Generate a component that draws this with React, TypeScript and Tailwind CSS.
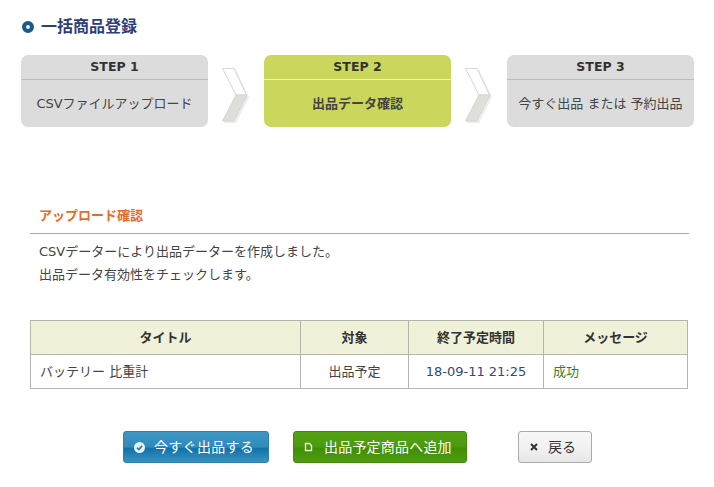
const font = "font-['DejaVu_Sans','Noto_Sans_CJK_JP',sans-serif]";

const steps = [
  { label: "STEP 1", body: "CSVファイルアップロード", active: false },
  { label: "STEP 2", body: "出品データ確認", active: true },
  { label: "STEP 3", body: "今すぐ出品 または 予約出品", active: false },
];

function Chevron() {
  return (
    <svg width="30" height="68" viewBox="0 0 30 68" className="shrink-0">
      <path d="M3 13 L15 13 L28 40 L15 66 L3 66 L16 40 Z" fill="#ecece9" />
      <path d="M1.5 11.5 L13 11.5 L25.5 38 L15 38 Z" fill="#ffffff" stroke="#d6d6d2" strokeWidth="1" />
      <path d="M15 38 L26 38 L12.5 64 L1.5 64 Z" fill="#dededa" stroke="#d6d6d2" strokeWidth="1" />
    </svg>
  );
}

function StepCard({ label, body, active }: { label: string; body: string; active: boolean }) {
  return (
    <div className={`w-[187px] h-[72px] rounded-[7px] flex flex-col ${active ? "bg-[#cbd65c]" : "bg-[#dcdcdc]"}`}>
      <div
        className={`h-[25px] border-b text-center text-[12.5px] font-bold leading-[24px] text-[#333] ${
          active ? "border-[#eef2c4]" : "border-[#bdbdbd]"
        }`}
      >
        {label}
      </div>
      <div className={`flex-1 flex items-center justify-center text-[13px] text-[#444] ${active ? "font-bold text-[#333]" : ""}`}>
        {body}
      </div>
    </div>
  );
}

export default function App() {
  return (
    <div className={`w-[714px] h-[487px] bg-white overflow-hidden ${font}`}>
      <div className="pt-[16px] pl-[22px] h-[55px]">
        <div className="flex items-center gap-[7px] h-[22px]">
          <span className="w-[12px] h-[12px] rounded-full border-[4px] border-[#17598a] bg-[#e6eef3]" />
          <h1 className="text-[16px] font-bold text-[#2c3f7c]">一括商品登録</h1>
        </div>
      </div>

      <div className="flex items-center pl-[21px]">
        <StepCard {...steps[0]} />
        <div className="w-[56px] h-[72px] flex justify-center items-center"><Chevron /></div>
        <StepCard {...steps[1]} />
        <div className="w-[56px] h-[72px] flex justify-center items-center"><Chevron /></div>
        <StepCard {...steps[2]} />
      </div>

      <div className="pl-[30px] w-[689px] mt-[78px]">
        <h2 className="pl-[9px] h-[29px] border-b border-[#aaa] text-[13px] font-bold leading-[21px] text-[#e8692a]">
          アップロード確認
        </h2>
        <div className="pl-[9px] pt-[6px] text-[13px] leading-[23px] text-[#444]">
          <p>CSVデーターにより出品データーを作成しました。</p>
          <p>出品データ有効性をチェックします。</p>
        </div>

        <table className="mt-[34px] w-[658px] table-fixed border-collapse text-[13px] text-[#444]">
          <thead>
            <tr className="h-[34px] bg-[#eff1d9] text-[#333]">
              <th className="w-[270px] border border-[#b4b4a8] font-bold">タイトル</th>
              <th className="w-[108px] border border-[#b4b4a8] font-bold">対象</th>
              <th className="w-[135px] border border-[#b4b4a8] font-bold">終了予定時間</th>
              <th className="border border-[#b4b4a8] font-bold">メッセージ</th>
            </tr>
          </thead>
          <tbody>
            <tr className="h-[34px]">
              <td className="border border-[#b4b4b4] pl-[9px]">バッテリー 比重計</td>
              <td className="border border-[#b4b4b4] text-center">出品予定</td>
              <td className="border border-[#b4b4b4] text-center text-[#34487a]">18-09-11 21:25</td>
              <td className="border border-[#b4b4b4] pl-[9px] text-[#3d7a2a]">成功</td>
            </tr>
          </tbody>
        </table>
      </div>

      <div className="flex mt-[42px] pl-[123px] text-[14px]">
        <button className="w-[146px] h-[32px] rounded-[3px] border border-[#2b80ad] bg-[linear-gradient(#3f96c2_0%,#2f8bbb_50%,#0f73a8_55%,#3a93c0_100%)] text-white flex items-center pl-[10px] gap-[9px]">
          <svg width="11" height="11" viewBox="0 0 11 11">
            <circle cx="5.5" cy="5.5" r="5.5" fill="#e8f2f7" />
            <path d="M3 5.6 L4.9 7.5 L8 3.9" fill="none" stroke="#2f80ad" strokeWidth="1.7" />
          </svg>
          <span className="tracking-[0.3px]">今すぐ出品する</span>
        </button>
        <button className="ml-[24px] w-[174px] h-[32px] rounded-[3px] border border-[#3f8a0c] bg-[linear-gradient(#55a115_0%,#4c9a0e_50%,#3f8f05_55%,#4f9c10_100%)] text-white flex items-center pl-[10px] gap-[11px]">
          <svg width="9" height="10" viewBox="0 0 9 10">
            <path d="M1.5 1.5 H5.5 L7.5 3.5 V8.5 H1.5 Z" fill="none" stroke="#e4f2d4" strokeWidth="1.4" />
          </svg>
          <span className="tracking-[0.2px]">出品予定商品へ追加</span>
        </button>
        <button className="ml-[51px] w-[74px] h-[32px] rounded-[3px] border border-[#aaa] bg-[linear-gradient(#f7f7f7,#f2f2f2_50%,#e6e6e6)] text-[#333] flex items-center pl-[11px] gap-[10px]">
          <svg width="8" height="8" viewBox="0 0 8 8">
            <path d="M1 1 L7 7 M7 1 L1 7" stroke="#333" strokeWidth="2" />
          </svg>
          戻る
        </button>
      </div>
    </div>
  );
}
